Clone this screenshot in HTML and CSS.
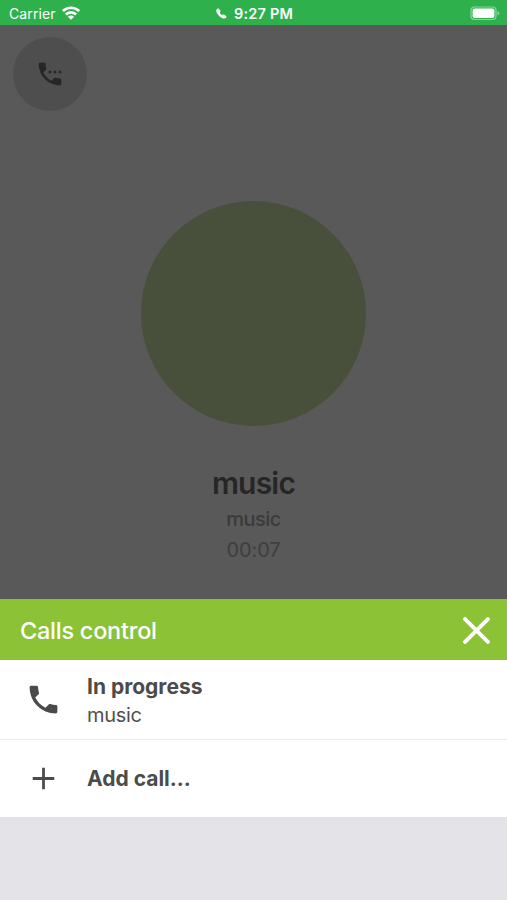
FILE: index.html
```html
<!DOCTYPE html>
<html lang="en">
<head>
<meta charset="utf-8">
<title>Calls control</title>
<link rel="stylesheet" href="styles.css">
</head>
<body>
<header class="status">
  <div class="status-left">
    <span class="carrier">Carrier</span>
    <svg class="wifi" viewBox="0 0 18 14"><g fill="none" stroke="#fff" stroke-width="2.700"><path d="M.9 5.1a11.5 11.5 0 0 1 16.2 0"/><path d="M3.900 8.500a7.200 7.200 0 0 1 10.200 0"/></g><path fill="#fff" d="M9 13.800 5.900 10.700a4.400 4.400 0 0 1 6.200 0z"/></svg>
  </div>
  <div class="status-time">
    <svg class="mini-phone" viewBox="0 0 11 11"><path fill="#fff" d="M1.300.8C.3 1.500 0 2.700.5 4.100c1.200 3 3.300 5 6.200 6.200 1.500.6 2.800.3 3.600-.8.400-.6.300-1.100-.2-1.500L8.300 6.700c-.6-.4-1.100-.3-1.500.1l-.5.300C5.400 6.700 4.300 5.600 3.800 4.700l.3-.6c.5-.5.5-1 .1-1.500L3 .9C2.500.3 1.900.3 1.300.8z"/></svg>
    <span class="clock">9:27 PM</span>
  </div>
  <svg class="battery" viewBox="0 0 30 15"><rect x="1" y="1" width="25" height="12.500" rx="3.500" fill="none" stroke="#8bd69c" stroke-width="1.200"/><rect x="2.600" y="2.600" width="21.800" height="9.300" rx="2" fill="#fff"/><path fill="#8bd69c" d="M27.500 5c2.300.8 2.300 3.700 0 4.500z"/></svg>
</header>
<main class="call">
  <div class="switch"><svg viewBox="0 0 24 24"><path fill="#262626" d="M11 9.300h2v2h-2zM15 9.300h2v2h-2zM19 9.300h2v2h-2zM20 15.500c-1.250 0-2.450-.2-3.570-.57-.35-.11-.74-.03-1.020.24l-2.200 2.200c-2.830-1.440-5.150-3.750-6.590-6.590l2.200-2.200c.28-.28.36-.67.25-1.020C8.700 6.450 8.500 5.250 8.500 4c0-.55-.45-1-1-1H4c-.55 0-1 .45-1 1 0 9.390 7.610 17 17 17 .55 0 1-.45 1-1v-3.500c0-.55-.45-1-1-1z"/></svg></div>
  <div class="avatar"></div>
  <h1 class="name">music</h1>
  <p class="number">music</p>
  <p class="timer">00:07</p>
</main>
<section class="sheet">
  <div class="sheet-head">
    <h2 class="title">Calls control</h2>
    <svg class="close" viewBox="0 0 26 26"><path d="M2 2l22 22M24 2L2 24" stroke="#fff" stroke-width="3.800" stroke-linecap="round"/></svg>
  </div>
  <div class="row">
    <svg class="icon" viewBox="0 0 24 24"><path fill="#4b4b4b" d="M20 15.500c-1.250 0-2.450-.2-3.570-.57-.35-.11-.74-.03-1.020.24l-2.200 2.200c-2.830-1.440-5.150-3.750-6.590-6.590l2.200-2.200c.28-.28.36-.67.25-1.020C8.700 6.450 8.500 5.250 8.500 4c0-.55-.45-1-1-1H4c-.55 0-1 .45-1 1 0 9.390 7.610 17 17 17 .55 0 1-.45 1-1v-3.500c0-.55-.45-1-1-1z"/></svg>
    <div class="lines">
      <span class="strong">In progress</span>
      <span class="sub">music</span>
    </div>
  </div>
  <div class="row">
    <svg class="icon" viewBox="0 0 24 24"><path fill="#4b4b4b" d="M19 12.900h-6.100V19h-1.800v-6.100H5v-1.800h6.100V5h1.800v6.100H19z"/></svg>
    <span class="strong">Add call...</span>
  </div>
</section>
</body>
</html>
```
FILE: styles.css
```css
* { box-sizing: border-box; }
body {
  margin: 0;
  height: 900px;
  display: flex;
  flex-direction: column;
  overflow: hidden;
  background: #e4e3e8;
  font-family: Inter, sans-serif;
}
h1, h2, p { margin: 0; }
svg { display: block; flex: none; }
span, h1, h2, p { white-space: nowrap; }
.status {
  height: 25px;
  padding: 2px 7px 0 9px;
  display: grid;
  grid-template-columns: 1fr auto 1fr;
  align-items: center;
  background: #2eb14c;
  color: #fff;
}
.status-left, .status-time { display: flex; align-items: center; }
.carrier { width: 53px; font-size: 14px; letter-spacing: .1px; }
.wifi { width: 18px; height: 14px; margin-top: -2px; }
.mini-phone { width: 11px; height: 11px; margin: 0 7px 0 0; }
.clock { font-size: 14.500px; font-weight: 600; letter-spacing: .2px; }
.battery { width: 30px; height: 15px; justify-self: end; margin-top: -1px; }
.call {
  height: 574px;
  padding-top: 12px;
  display: flex;
  flex-direction: column;
  align-items: center;
  border-bottom: 0;
  background: #595959;
}
.switch {
  width: 74px;
  height: 74px;
  margin-left: 13px;
  align-self: flex-start;
  display: grid;
  place-items: center;
  border-radius: 50%;
  background: #4e4e4e;
}
.switch svg { width: 30px; height: 30px; }
.avatar {
  width: 225px;
  height: 225px;
  margin-top: 90px;
  border-radius: 50%;
  background: #484f3b;
}
.name { margin-top: 39px; font-size: 30px; line-height: 36px; font-weight: 600; letter-spacing: -.8px; color: #262626; }
.number { margin-top: 4px; font-size: 20px; line-height: 28px; font-weight: 500; letter-spacing: -.5px; color: #3b3b3b; }
.timer { margin-top: 2px; font-size: 20px; line-height: 30px; letter-spacing: -.1px; color: #3e3e3e; }
.sheet-head {
  height: 61px;
  padding: 1px 17px 0 20px;
  display: flex;
  align-items: center;
  justify-content: space-between;
  background: #8bc236;
}
.title { color: #fff; font-size: 23.500px; font-weight: 550; letter-spacing: -.25px; }
.close { width: 27px; height: 27px; }
.row {
  height: 79px;
  padding-left: 25px;
  display: flex;
  align-items: center;
  gap: 25px;
  background: #fff;
}
.row + .row { height: 78px; border-top: 1px solid #ebebeb; }
.icon { width: 37px; height: 37px; }
.lines { display: flex; flex-direction: column; padding-top: 3px; }
.strong { font-size: 21px; line-height: 28px; font-weight: 700; color: #4b4b4b; }
.sub { font-size: 20px; line-height: 28px; letter-spacing: -.3px; color: #505050; }
```
